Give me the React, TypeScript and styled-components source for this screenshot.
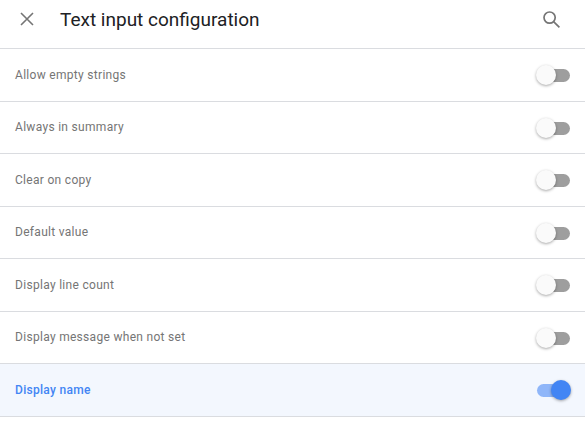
import styled, { createGlobalStyle } from 'styled-components';

const GlobalStyle = createGlobalStyle`
  html, body {
    margin: 0;
    padding: 0;
    background-color: #fff;
  }
  * {
    box-sizing: border-box;
  }
`;

const Page = styled.div`
  width: 585px;
  height: 424px;
  overflow: hidden;
  background-color: #fff;
`;

const Header = styled.header`
  height: 49px;
  display: flex;
  align-items: center;
  padding: 0 25px 10px 19px;
  border-bottom: 1px solid #dadce0;
`;

const IconButton = styled.button`
  padding: 0;
  border: 0;
  background: none;
  color: #757575;
  display: flex;
  align-items: center;
  justify-content: center;
`;

const Title = styled.h1`
  flex: 1;
  margin: 1px 0 0 25px;
  font-family: Roboto, 'Liberation Sans', sans-serif;
  font-size: 19px;
  font-weight: 400;
  line-height: 24px;
  color: #202124;
`;

const Row = styled.div<{ $active?: boolean }>`
  height: 52.5px;
  display: flex;
  align-items: center;
  justify-content: space-between;
  padding: 0 15px;
  border-bottom: 1px solid #dadce0;
  background-color: ${(p) => (p.$active ? '#f3f7fe' : '#fff')};
`;

const Label = styled.span<{ $active?: boolean }>`
  font-family: Roboto, 'Liberation Sans', sans-serif;
  font-size: 12px;
  font-weight: ${(p) => (p.$active ? 500 : 400)};
  letter-spacing: ${(p) => (p.$active ? '0.3px' : '0.3px')};
  color: ${(p) => (p.$active ? '#4285f4' : '#757575')};
`;

const Toggle = styled.div<{ $on?: boolean }>`
  position: relative;
  width: 33px;
  height: 13px;
  border-radius: 7px;
  background-color: ${(p) => (p.$on ? '#8fb6f9' : '#9e9e9e')};
  margin-top: 2px;
`;

const Knob = styled.span<{ $on?: boolean }>`
  position: absolute;
  top: -4px;
  left: ${(p) => (p.$on ? '14px' : '-1px')};
  width: 20px;
  height: 20px;
  border-radius: 50%;
  background-color: ${(p) => (p.$on ? '#4285f4' : '#fafafa')};
  box-shadow: 0 1px 3px rgba(0, 0, 0, 0.35);
`;

const settings = [
  'Allow empty strings',
  'Always in summary',
  'Clear on copy',
  'Default value',
  'Display line count',
  'Display message when not set',
  'Display name',
];

export default function App() {
  return (
    <Page>
      <GlobalStyle />
      <Header>
        <IconButton aria-label="close">
          <svg width="16" height="16" viewBox="0 0 16 16" fill="none" stroke="currentColor" strokeWidth="1.6">
            <path d="M2 2l12 12M14 2L2 14" />
          </svg>
        </IconButton>
        <Title>Text input configuration</Title>
        <IconButton aria-label="search">
          <svg width="17" height="17" viewBox="0 0 17 17" fill="none" stroke="currentColor" strokeWidth="1.7">
            <circle cx="6.6" cy="6.6" r="5.6" />
            <path d="M10.6 10.6l5.8 5.8" />
          </svg>
        </IconButton>
      </Header>
      {settings.map((name) => {
        const on = name === 'Display name';
        return (
          <Row key={name} $active={on}>
            <Label $active={on}>{name}</Label>
            <Toggle $on={on}>
              <Knob $on={on} />
            </Toggle>
          </Row>
        );
      })}
    </Page>
  );
}
